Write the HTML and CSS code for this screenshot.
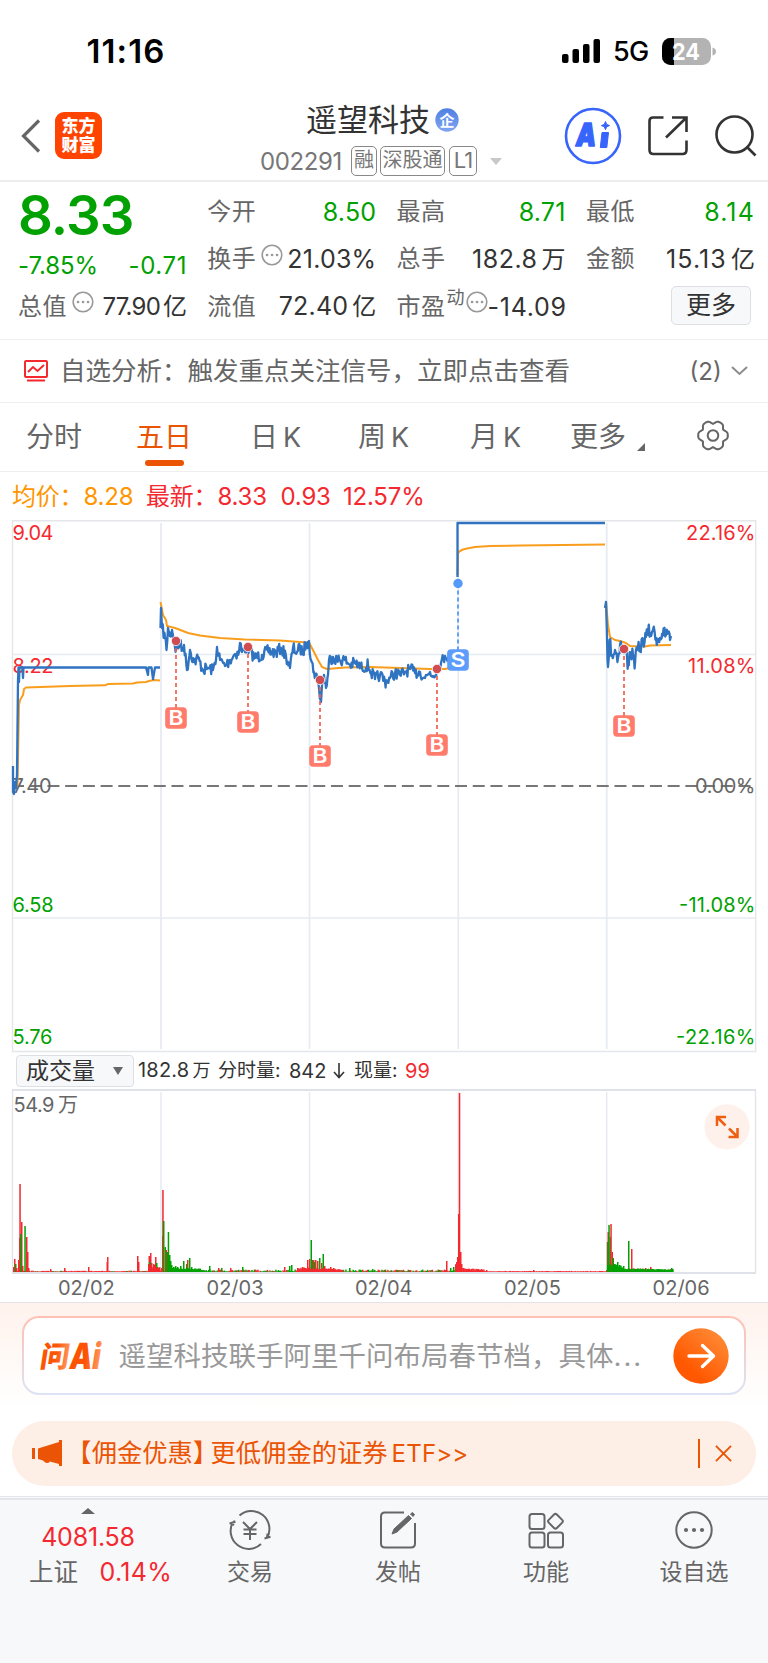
FILE: index.html
```html
<!DOCTYPE html>
<html lang="zh-CN">
<head>
<meta charset="utf-8">
<title>遥望科技 002291</title>
<link rel="stylesheet" href="styles.css">
</head>
<body>
<div class="status">
  <span class="clock">11:16</span>
  <svg class="signal" width="38" height="24" viewBox="0 0 38 24"><rect x="0" y="15" width="6.5" height="9" rx="2"/><rect x="10.5" y="10" width="6.5" height="14" rx="2"/><rect x="21" y="5" width="6.5" height="19" rx="2"/><rect x="31.500" y="0" width="6.5" height="24" rx="2"/></svg>
  <span class="net">5G</span>
  <svg class="battery" width="54" height="27" viewBox="0 0 54 27"><defs><clipPath id="bat"><rect width="49" height="27" rx="8.500"/></clipPath></defs><g clip-path="url(#bat)"><rect width="49" height="27" fill="#b3b3b3"/><rect width="12" height="27" fill="#000"/></g><path d="M50.500 9.500q3.500 1 3.500 4t-3.500 4z" fill="#b3b3b3"/><text x="10" y="21.500" textLength="28" lengthAdjust="spacingAndGlyphs" fill="#fff">24</text></svg>
</div>

<header class="header">
  <svg class="back" width="20" height="34" viewBox="0 0 20 34"><path d="M18 1.500 2.500 17 18 32.500" fill="none" stroke="#666" stroke-width="3.2"/></svg>
  <div class="logo"><span>东方</span><span>财富</span></div>
  <div class="title">
    <div class="name">遥望科技<svg width="24" height="24" viewBox="0 0 24 24"><defs><linearGradient id="ent" x2="0" y2="1"><stop stop-color="#4f7fe2"/><stop offset="1" stop-color="#80a6f2"/></linearGradient></defs><circle cx="12" cy="12" r="11.700" fill="url(#ent)"/><text x="4.500" y="17.500" textLength="15">企</text></svg></div>
    <div class="code"><span class="num">002291</span><span class="tag t1">融</span><span class="tag t2">深股通</span><span class="tag t3">L1</span><i class="down"></i></div>
  </div>
  <svg class="ai" width="58" height="58" viewBox="0 0 58 58"><circle cx="29" cy="29" r="27" fill="none" stroke="#3764fb" stroke-width="2.600"/><text x="12" y="39" textLength="20" lengthAdjust="spacingAndGlyphs" fill="#3764fb" stroke="#3764fb" stroke-width="1.600" stroke-linejoin="round">A</text><path d="M38 25.500h6.500l-1.700 15h-6.500zM41.500 14.500l1.200 2.900 2.900 1.200-2.900 1.200-1.200 2.900-1.200-2.900-2.900-1.200 2.900-1.200z" fill="#3764fb" stroke="#3764fb"/></svg>
  <svg class="share" width="40" height="41" viewBox="0 0 40 41" fill="none" stroke="#333" stroke-width="2.600"><path d="M15.500 2.500H5Q1.500 2.500 1.500 6v29q0 4 4 4h29q4 0 4-4V25.500M24 2.500h14.500V17M37.500 3.500 18 22.500"/></svg>
  <svg class="search" width="42" height="42" viewBox="0 0 42 42" fill="none" stroke="#333" stroke-width="2.600"><circle cx="19.500" cy="19.500" r="18"/><path d="m31.500 31.500 9 9"/></svg>
</header>

<section class="quote">
  <div class="col first">
    <div class="price green">8.33</div>
    <div class="chg green"><span>-7.85%</span><span class="abs">-0.71</span></div>
    <div class="row"><label>总值</label><svg class="more" width="22" height="22" viewBox="0 0 22 22"><circle cx="11" cy="11" r="9.800"/><path d="M6 11h.1M11 11h.1M16 11h.1"/></svg><b class="tight">77.90<u>亿</u></b></div>
  </div>
  <div class="col">
    <div class="row"><label>今开</label><b class="green">8.50</b></div>
    <div class="row"><label>换手</label><svg class="more" width="22" height="22" viewBox="0 0 22 22"><circle cx="11" cy="11" r="9.800"/><path d="M6 11h.1M11 11h.1M16 11h.1"/></svg><b>21.03%</b></div>
    <div class="row"><label>流值</label><b>72.40<u>亿</u></b></div>
  </div>
  <div class="col">
    <div class="row"><label>最高</label><b class="green">8.71</b></div>
    <div class="row"><label>总手</label><b class="wide">182.8<u>万</u></b></div>
    <div class="row"><label>市盈</label><sup>动</sup><svg class="more near" width="22" height="22" viewBox="0 0 22 22"><circle cx="11" cy="11" r="9.800"/><path d="M6 11h.1M11 11h.1M16 11h.1"/></svg><b class="pe">-14.09</b></div>
  </div>
  <div class="col">
    <div class="row"><label>最低</label><b class="green wider">8.14</b></div>
    <div class="row"><label>金额</label><b class="wider">15.13<u>亿</u></b></div>
    <div class="row"><span class="btn">更多</span></div>
  </div>
</section>

<section class="analysis">
  <svg width="24" height="22" viewBox="0 0 24 22" fill="none" stroke="#f4292f" stroke-width="2"><rect x="1" y="1" width="22" height="16" rx="1"/><path d="m4 12 5-5 4.500 4L20 5M3 20.500h18"/></svg>
  <span class="msg">自选分析：触发重点关注信号，立即点击查看</span>
  <span class="count">(2)</span>
  <svg width="17" height="10" viewBox="0 0 17 10" fill="none" stroke="#8c8c8c" stroke-width="2"><path d="m1 1 7.500 7L16 1"/></svg>
</section>

<nav class="tabs">
  <span class="w1">分时</span><span class="w2 on">五日</span><span class="w3">日<em>K</em></span><span class="w4">周<em>K</em></span><span class="w5">月<em>K</em></span><span class="w6">更多<i></i></span>
  <svg width="32" height="31" viewBox="-16 -15.500 32 31" fill="none" stroke="#666" stroke-width="2"><path id="gear"/><circle r="5.300"/></svg>
</nav>

<div class="legend"><span class="avg">均价：<s>8.28</s></span><span class="last">最新：<s>8.33</s></span><span class="d">0.93</span><span class="p">12.57%</span></div>

<svg class="chart" width="768" height="532" viewBox="0 520 768 532">
  <g stroke="#e4e6ea" stroke-width="1.400" fill="none"><path d="M12.500 520.700h743.200v530.800H12.500z"/></g>
  <g stroke="#e6eaf1" stroke-width="1.700"><path d="M161 523v526M309.500 523v526M458.300 523v526M606.700 523v526M13 654.500h742M13 918h742"/></g>
  <path d="M12 786h744" stroke="#777" stroke-width="2.200" stroke-dasharray="12 5.720" stroke-dashoffset="0"/>
  <g class="axis">
    <g class="red"><text x="12.500" y="540" textLength="41">9.04</text><text x="12.500" y="672.500" textLength="41">8.22</text></g>
    <text x="12.500" y="792.500" textLength="39" class="gray">7.40</text>
    <g class="green"><text x="12.500" y="911.500" textLength="41">6.58</text><text x="12.500" y="1044" textLength="40">5.76</text></g>
    <g class="red"><text x="686" y="540" textLength="69.500">22.16%</text><text x="688" y="672.500" textLength="67.500">11.08%</text></g>
    <text x="695" y="792.500" textLength="60.500" class="gray">0.00%</text>
    <g class="green"><text x="679" y="911.500" textLength="76.500">-11.08%</text><text x="676" y="1044" textLength="79.500">-22.16%</text></g>
  </g>
  <g fill="none" stroke-linejoin="round"><g id="avg" stroke="#f99d1c" stroke-width="2"></g><g id="price" stroke="#3074c1" stroke-width="2.300"></g></g>
  <g id="marks"></g>
</svg>

<div class="volhead"><span class="pick">成交量<i></i></span><span class="v1">182.8<u>万</u></span><span class="v2">分时量:</span><span class="v3">842</span><svg width="12" height="16" viewBox="0 0 12 16" fill="none" stroke="#333" stroke-width="1.600"><path d="M6 0v14M1 9l5 5.500L11 9"/></svg><span class="v4">现量:</span><span class="v5">99</span></div>

<svg class="vol" width="768" height="186" viewBox="0 1088 768 186">
  <path d="M12.500 1090v184M755.500 1090v184" stroke="#e0e3e9" stroke-width="1.300"/>
  <path d="M12 1090h744M12 1273h744" stroke="#dfe2e9" stroke-width="1.800"/>
  <path d="M161 1092v180M309.500 1092v180M458.300 1092v180M606.700 1092v180" stroke="#e6eaf1" stroke-width="1.500"/>
  <g id="bars"></g>
  <g class="axis gray"><text x="13.500" y="1112" textLength="41">54.9</text><text x="58" y="1112" textLength="18">万</text></g>
  <circle cx="727" cy="1126.800" r="22.600" fill="#fef0ea"/>
  <path d="M717 1126v-9h9M717.500 1117.500l8 8M737.500 1128v9h-9M737 1136.500l-8-8" fill="none" stroke="#ee5f12" stroke-width="2.500"/>
</svg>
<div class="dates"><span>02/02</span><span>02/03</span><span>02/04</span><span>02/05</span><span>02/06</span></div>

<section class="ask">
  <div class="askbox">
    <svg width="66" height="34" viewBox="0 0 66 34"><defs><linearGradient id="asg" x2="1"><stop offset=".5" stop-color="#fd5305"/><stop offset="1" stop-color="#ff9a62"/></linearGradient></defs><g transform="skewX(-9)" fill="url(#asg)"><text x="4.500" y="28.500" font-size="29" textLength="29" lengthAdjust="spacingAndGlyphs">问</text><text x="34" y="30" font-size="36" textLength="31" lengthAdjust="spacingAndGlyphs">Ai</text></g></svg>
    <span class="hint">遥望科技联手阿里千问布局春节档，具体<tt>...</tt></span>
    <svg width="56" height="56" viewBox="0 0 56 56"><defs><linearGradient id="go" x1=".3" y1=".75" x2=".85" y2=".1"><stop stop-color="#ff5800"/><stop offset="1" stop-color="#ff8934"/></linearGradient></defs><circle cx="28" cy="28" r="27.700" fill="url(#go)"/><path d="M16 28h24M29.500 17.500 40.500 28l-11 10.500" fill="none" stroke="#fff" stroke-width="3.400" stroke-linecap="round" stroke-linejoin="round"/></svg>
  </div>
</section>

<section class="banner">
  <svg width="31" height="26" viewBox="0 0 31 26" fill="#ea5404"><path d="M0 8h3v11H0zM6 8.500 27 2V0h3v26h-3v-2l-9-2.500q-3 3.500-7-1L6 19z"/></svg>
  <span class="promo"><q>【</q>佣金优惠<q class="end">】</q>更低佣金的证券<em>ETF&gt;&gt;</em></span>
  <i class="bar"></i>
  <svg width="17" height="17" viewBox="0 0 18 18" stroke="#ea5404" stroke-width="2"><path d="m1 1 16 16M17 1 1 17"/></svg>
</section>

<footer class="foot">
  <div class="index"><i></i><div class="pt">4081.58</div><div class="ix"><span>上证</span><b>0.14%</b></div></div>
  <div class="item"><svg width="44" height="40" viewBox="-22 -20 44 40"><path d="M-10.500-14.500A18 18 0 0 1 17 8M11 14A18 18 0 0 1-17-8M14.500 8.500l6-1.800M-20.500-6.500l6-1.800M17.500 3.500 17 8.500M-15.500-9.500l-1.500 5"/><path d="m-7-8 7 7 7-7M0-1v11M-6.500-.5h13M-6.500 4h13"/></svg><span>交易</span></div>
  <div class="item"><svg width="44" height="40" viewBox="-22 -20 44 40"><path d="M6-17.500h-19q-4 0-4 4v27q0 4 4 4h26q4 0 4-4V-7"/><path d="M-6 4-4-1 10.500-14.500l3 3L-1 2zM12.500-16l2-1.500 2 2-1.500 2z" fill="#666" stroke-width="1"/></svg><span>发帖</span></div>
  <div class="item"><svg width="44" height="40" viewBox="-22 -20 44 40"><rect x="-16.500" y="-16" width="15" height="15" rx="2.500"/><rect x="-16.500" y="2.500" width="15" height="15" rx="2.500"/><rect x="2" y="2.500" width="15" height="15" rx="2.500"/><rect x="3.700" y="-14.500" width="11.500" height="11.500" rx="2" transform="rotate(45 9.450 -8.750)"/></svg><span>功能</span></div>
  <div class="item"><svg width="44" height="40" viewBox="-22 -20 44 40"><circle r="17.700"/><g fill="#666" stroke="none"><circle cx="-8" r="2.100"/><circle r="2.100"/><circle cx="8" r="2.100"/></g></svg><span>设自选</span></div>
</footer>
<script src="chart.js"></script>
</body>
</html>
```
FILE: styles.css
```css
* { box-sizing: border-box; }
body { margin: 0; width: 768px; height: 1663px; background: #fff; color: #333; font-family: Inter, "Noto Sans CJK SC", sans-serif; font-weight: 400; white-space: nowrap; overflow: hidden; }
svg { display: block; flex: none; overflow: visible; }
b, em, i, u, s, q, tt, label { font: inherit; text-decoration: none; }
q::before, q::after { content: none; }
u { margin-left: 4px; }
.green { color: #00a100; fill: #00a100; }
.red { fill: #f4292f; }
.gray { fill: #666; }

.status { height: 100px; display: flex; align-items: center; padding-top: 2px; color: #000; }
.clock { width: 475px; padding-left: 86.500px; font-size: 33px; font-weight: 600; letter-spacing: 1.100px; }
.signal { margin-left: 87px; }
.net { width: 49px; margin-left: 13px; font-size: 27px; font-weight: 500; letter-spacing: -.6px; }
.battery text { font-size: 23px; font-weight: 700; }

.header { height: 82px; display: flex; border-bottom: 2px solid #ececec; align-items: flex-start; }
.back { margin: 19px 0 0 21px; }
.logo { width: 47px; height: 47px; margin: 12px 0 0 14px; border-radius: 9px; background: #ff4400; color: #fff; display: flex; flex-direction: column; align-items: center; justify-content: center; font-size: 17px; font-weight: 900; line-height: 18.500px; }
.title { width: 245px; margin-left: 158px; }
.name { height: 42px; display: flex; align-items: center; padding: 0 0 2px 46px; font-size: 31px; line-height: 40px; }
.name svg { margin-left: 5px; }
.name text { font-size: 15px; font-weight: 700; fill: #fff; }
.code { height: 36px; display: flex; align-items: center; margin-top: 1px; color: #777; }
.num { width: 91px; font-size: 24px; letter-spacing: -.4px; }
.tag { height: 30px; border: 1.500px solid #888; border-radius: 5px; line-height: 27px; text-align: center; font-size: 20px; margin-right: 4px; }
.t1 { width: 26px; margin-right: 3px; } .t2 { width: 65px; } .t3 { width: 28px; font-size: 22px; letter-spacing: -1px; }
.down { margin-left: 9px; border: 6.500px solid transparent; border-top: 7px solid #c8c8c8; border-bottom: 0; }
.ai { margin: 7px 0 0 58.500px; }
.ai text { font-size: 32px; font-weight: 900; font-style: italic; }
.share { margin: 15px 0 0 26px; }
.search { margin: 15px 0 0 27px; }

.quote { height: 158px; display: grid; grid-template-columns: repeat(4, 169px); column-gap: 20.300px; padding: 6px 12px 0 18px; border-bottom: 1px solid #efefef; }
.row { height: 47.500px; display: flex; align-items: center; font-size: 25px; line-height: 32px; }
.row label { color: #666; font-size: 24px; letter-spacing: .5px; }
.row b { margin-left: auto; letter-spacing: .2px; }
.row b.wide { letter-spacing: .5px; }
.row b.wider { letter-spacing: 1.100px; }
.row b.pe { letter-spacing: .7px; margin-right: -1px; }
.row b.tight { letter-spacing: -.8px; font-size: 24px; }
.row b.tight u { margin-left: 3px; }
.row b u { font-size: 24px; letter-spacing: 0; }
.row sup { align-self: flex-start; font-size: 18px; line-height: 24px; color: #666; margin: 3px 0 0 1px; }
.more { margin: -9px 0 0 5px; fill: none; stroke: #999; stroke-width: 1.600; }
.more path { stroke-width: 2.600; stroke-linecap: round; }
.near { margin-left: 1px; }
.price { height: 54px; font-size: 54.500px; font-weight: 600; line-height: 55px; letter-spacing: -.9px; }
.chg { height: 41px; display: flex; justify-content: space-between; align-items: center; padding-top: 6px; font-size: 24px; letter-spacing: -.1px; }
.abs { letter-spacing: .6px; }
.btn { width: 80px; height: 39px; margin: -3px 4px 0 auto; border: 1px solid #dddfe5; border-radius: 5px; background: #f7f8fa; text-align: center; line-height: 36px; font-size: 25px; }

.analysis { height: 63px; display: flex; align-items: center; border-bottom: 1px solid #efefef; padding-left: 23.500px; color: #666; }
.msg { width: 642px; padding-left: 12.500px; font-size: 25.500px; line-height: 40px; }
.count { width: 41px; font-size: 24px; }

.tabs { height: 69px; display: flex; border-bottom: 1px solid #efefef; color: #666; font-size: 28px; line-height: 68px; }
.tabs span { flex: none; position: relative; }
.w1 { margin-left: 26px; width: 110px; }
.w2 { width: 114px; }
.w3 { width: 108px; } .w4 { width: 112px; } .w5 { width: 100px; } .w6 { width: 127px; }
.tabs em { margin-left: 5px; font-size: 27px; }
.on { color: #ea5404; }
.on::after { content: ""; position: absolute; left: 9px; bottom: 5px; width: 39px; height: 6px; border-radius: 3px; background: #ea5404; }
.w6 i { display: inline-block; border: 4px solid #666; border-top-color: transparent; border-left-color: transparent; margin-left: 11px; vertical-align: -4px; }
.tabs svg { margin-top: 17px; }

.legend { height: 48px; display: flex; align-items: center; padding: 1px 0 0 12px; font-size: 24px; line-height: 40px; color: #f4292f; letter-spacing: -.2px; }
.legend span { flex: none; }
.avg { color: #ff9500; width: 134px; }
.last { width: 134.500px; }
.d { width: 62.500px; }
.axis text { font-size: 20px; }
.volhead { height: 36px; display: flex; align-items: center; padding: 1px 0 0 16px; font-size: 20px; line-height: 28px; }
.pick { width: 118px; height: 32px; border: 1px solid #dddfe5; border-radius: 4px; background: #f7f8fa; padding-left: 9px; font-size: 23px; line-height: 30px; }
.pick i { display: inline-block; border: 5px solid transparent; border-top: 8px solid #666; border-bottom: 0; margin-left: 18px; vertical-align: 4px; }
.v1 { width: 80px; margin-left: 4px; letter-spacing: .2px; } .v1 u { margin-left: 3px; font-size: 18px; }
.v2 { width: 71px; } .v3 { width: 44px; } .v4 { width: 51px; margin-left: 9px; } .v5 { color: #f4292f; }
.v2, .v4 { font-size: 19px; }
.dates { height: 28px; padding-left: 12px; display: flex; font-size: 20px; color: #666; line-height: 29px; }
.dates span { width: 148.700px; text-align: center; }

.ask { height: 119px; border-top: 1px solid #e4e4ea; background: linear-gradient(#fff2ec, #fff 105px); padding: 13px 22px 0; }
.askbox { height: 79px; border: 2px solid transparent; border-radius: 17px; background: linear-gradient(#fff, #fff) padding-box, linear-gradient(#ffc0b3, #dbe4f6) border-box; display: flex; align-items: center; padding-left: 15px; }
.askbox text { font-weight: 900; }
.hint { width: 568px; padding-left: 13.500px; color: #999; font-size: 27.500px; line-height: 40px; }
.hint tt { letter-spacing: 2px; }

.banner { height: 65px; margin: 0 12px; border-radius: 33px; background: #fdeee6; color: #ea5404; display: flex; align-items: center; padding-left: 20px; padding-bottom: 1px; font-size: 25.300px; line-height: 40px; }
.promo { width: 635px; padding-left: 16px; }
.promo em { margin-left: 4px; font-size: 24px; letter-spacing: .2px; }
.bar { width: 1.500px; height: 29px; background: #ea5404; margin-right: 15px; }
.banner q { font-feature-settings: "halt"; }
.banner q.end { margin-right: 5px; }

.foot { height: 167px; margin-top: 12px; border-top: 2px solid #e4e5ea; box-shadow: 0 -1px #f7f8fa, 0 -2px #e4e5ea; background: #f7f8fa; display: grid; grid-template-columns: 176px repeat(4, 148px); color: #666; }
.item { display: flex; flex-direction: column; align-items: center; padding-top: 10px; font-size: 23px; }
.item svg { fill: none; stroke: #666; stroke-width: 2; }
.item span { line-height: 34px; margin-top: 5px; }
.index { padding-top: 8px; display: flex; flex-direction: column; align-items: center; }
.index > i { border: 7px solid transparent; border-bottom: 6px solid #666; border-top: 0; }
.pt { color: #f4292f; font-size: 25px; line-height: 36px; margin-top: 5px; letter-spacing: -.2px; }
.ix { width: 146px; margin-left: 26px; display: flex; font-size: 24.500px; line-height: 34px; align-self: flex-start; }
.ix span { width: 73px; margin-left: 3px; }
.ix b { color: #f4292f; font-size: 25px; letter-spacing: .3px; }
```
FILE: chart.js
```js
const NS = "http://www.w3.org/2000/svg";
const $ = id => document.getElementById(id);
function add(parent, tag, attrs, text) {
  const el = document.createElementNS(NS, tag);
  for (const k in attrs) el.setAttribute(k, attrs[k]);
  if (text) el.textContent = text;
  parent.appendChild(el);
}
let seed = 7;
const rnd = () => (seed = (seed * 16807) % 2147483647) / 2147483647;

function line(parent, pts, noise) {
  let d = "M" + pts[0];
  for (let i = 1; i < pts.length; i++) {
    const [x0, y0] = pts[i - 1], [x1, y1] = pts[i];
    if (noise) for (let x = x0 + 0.8; x < x1 - 0.3; x += 0.8) {
      const t = (x - x0) / (x1 - x0);
      d += "L" + x.toFixed(1) + "," + (y0 + (y1 - y0) * t + (rnd() - 0.5) * noise).toFixed(1);
    }
    d += "L" + pts[i];
  }
  add($(parent), "path", { d });
}

line("avg", [[13,790],[17.5,785],[19,705],[20,700],[23,695],[24,689],[26,687.5],[70,686],[105,685.300],[108,684],[133,683.500],[137,682.500],[146,682],[149,681],[154,680],[160,680.500]]);
line("avg", [[160.500,602],[163,615],[166,620],[167,626],[175,628],[183,631],[188,633],[200,635.500],[220,638],[245,639.500],[280,640.500],[300,642],[309,642.500],[314,652],[318,660],[322,667],[327,669],[345,667.500],[370,667],[400,668],[430,669],[445,669],[454,667]]);
line("avg", [[457.500,575],[458,553],[460,551],[463,549.500],[467,548.500],[475,547],[490,546],[520,545.500],[605,544.500]]);
line("avg", [[606,601],[608,625],[610,637],[615,640],[620,641],[626,643],[630,646],[645,646.500],[650,645.500],[671,645]]);

line("price", [[13,766],[13,792],[14,794],[15,782],[16,788],[17,775],[18,680],[18.500,667.500],[19,682],[19.500,667.500],[22.500,667.500],[23,678],[23.500,667.500],[146,667.500],[148,675],[148.500,667.500],[151.500,667.500],[153,679],[155,667.500],[160,667.500]]);
line("price", [[160.500,628],[161,608],[162,628],[165,637],[166.500,650],[168,628],[170,636],[172,630],[174,640],[176,650],[180,643],[182,650],[184,645],[187,670],[190,650],[194,662],[198,658],[203,670],[208,668],[213,670],[216,660],[217,647],[220,660],[225,666],[230,660],[235,654],[239,652],[240,643],[242,652],[247,647],[255,658],[262,655],[268,651],[276,653],[281,648],[286,656],[290,668],[293,648],[297,652],[300,648],[303,653],[306,643],[308,642],[309,641],[311,660],[314,672],[318,680],[319,688],[321,702],[322,685],[324,675],[326,688],[328,675],[329,660],[333,657],[337,660],[345,660],[350,665],[355,663],[362,668],[368,665],[371,672],[375,679],[380,675],[386,682],[390,678],[395,673],[400,675],[405,672],[410,669],[415,673],[420,672],[425,678],[430,672],[433,676],[437,668],[441,663],[445,656],[450,655]], 12);
line("price", [[457.500,577],[457.500,523],[605,523]]);
line("price", [[605,608],[606,602],[607.500,660],[608,667],[609.500,640],[612,655],[615,650],[618,658],[620,645],[622,645],[624,653],[626,650],[628,666],[630,652],[633,655],[635,664],[637,650],[640,648],[643,641],[646,637],[648,632],[652,632],[653,630],[656,638],[660,638],[662,634],[666,635],[668,632],[670,640],[671,636]], 15);

/* trade marks: x, dot y, badge y, letter */
[[176,641,718,"B"],[248,647,722,"B"],[320,680,756,"B"],[437,669,745,"B"],[624,649,726,"B"],[458,583.500,660,"S"]].forEach(([x, y, b, t]) => {
  const buy = t === "B", g = $("marks");
  add(g, "path", { d: `M${x} ${y}V${b}`, stroke: buy ? "#f4604f" : "#4c93f8", "stroke-width": 1.7, "stroke-dasharray": "4 3" });
  add(g, "circle", { cx: x, cy: y, r: 4.7, fill: buy ? "#cf4c50" : "#559afa", stroke: "#fff", "stroke-width": buy ? 0.8 : 0 });
  add(g, "rect", { x: x - 10.8, y: b - 10.8, width: 21.600, height: 21.600, rx: 4, fill: buy ? "#ff7b6b" : "#5c9dfb" });
  add(g, "text", { x: x - 7.5, y: b + 7.2, textLength: 15, lengthAdjust: "spacingAndGlyphs", fill: "#fff", "font-size": 20, "font-weight": 600 }, t);
});

/* volume bars */
const RED = "#f4292f", GREEN = "#00a100";
const bar = (x, h, c) => add($("bars"), "rect", { x, y: 1272 - h, width: 1.500, height: h, fill: c });
[[13,160,0.8,0.15],[160,308,2,0.6],[308,455,2,0.55],[458,606,0.6,0],[606,672,3,0.65]].forEach(([a, b, h, g]) => {
  for (let x = a; x < b; x += 1.2) bar(x, 0.5 + rnd() * h, rnd() < g ? GREEN : RED);
});
[[13,5],[14,13],[15,8,1],[16,4],[18,12],[19,34],[19.300,88],[21,50],[20.200,38,1],[22,6],[24.300,46,1],[26,35],[27,20],[28,4],[50,3],[64,4],[88,5],[99,1],[106.500,10],[107,15],[137,16],[138,10],[148.500,16],[150,19],[149,10,1],[151,9],[153,8],[154,7,1],[155,15],[156,9,1],[157,5],[159,2],[161,4],[162,36],[162.200,82],[163,51,1],[164.500,25,1],[165.500,22],[166.500,20,1],[167.700,40,1],[169,17,1],[170,11,1],[171,7,1],[172,4,1],[173,5,1],[175,6,1],[177,5,1],[180,6,1],[183,11,1],[186,8,1],[187,12],[189,14,1],[191,5,1],[209,6,1],[218,4],[221,4,1],[230,4],[242,5,1],[284,5],[289,6,1],[291,7,1],[297,4],[302,5],[305,4],[307,12],[309,13],[310.500,32,1],[312,12,1],[313,12],[314,10,1],[315,12],[317,11],[319,14,1],[321,9],[322.500,18,1],[324,6],[330,5],[333,4],[349,4,1],[372,3,1],[446,11],[450,4,1],[453,5,1],[455,4],[456,10],[457,15],[458,58],[458.800,179],[460,20],[461,8],[463,4],[467,3],[486,2],[533,2],[606,2],[606.800,30,1],[607.500,40],[608.300,47,1],[609.500,35,1],[610.300,48],[611.500,20],[612.500,14,1],[614,8,1],[617,10,1],[619,7,1],[623,6,1],[628,31,1],[631,23],[633,3,1],[645,4],[650,5],[671,4,1],[672,3,1]].forEach(([x, h, g]) => bar(x, h, g ? GREEN : RED));
[[170,30,GREEN,4],[190,14,GREEN,2],[297,35,RED,4],[455,4,RED,8],[460,24,RED,3],[148,12,RED,7],[607,15,GREEN,9],[618,54,GREEN,3],[322,20,RED,3]].forEach(([x, w, c, h]) => {
  for (let i = 0; i < w; i += 1.1) bar(x + i, 1 + (0.5 + rnd() / 2) * h * (1 - 0.4 * i / w), c);
});

/* settings gear outline, six soft lobes */
let gd = "";
for (let a = 0; a <= 360; a += 4) {
  const t = a * Math.PI / 180, r = 13.700 + 1.500 * Math.cos(6 * t) - 0.400 * Math.cos(12 * t);
  gd += (a ? "L" : "M") + (r * Math.cos(t)).toFixed(2) + "," + (r * Math.sin(t)).toFixed(2);
}
$("gear").setAttribute("d", gd + "z");
```
